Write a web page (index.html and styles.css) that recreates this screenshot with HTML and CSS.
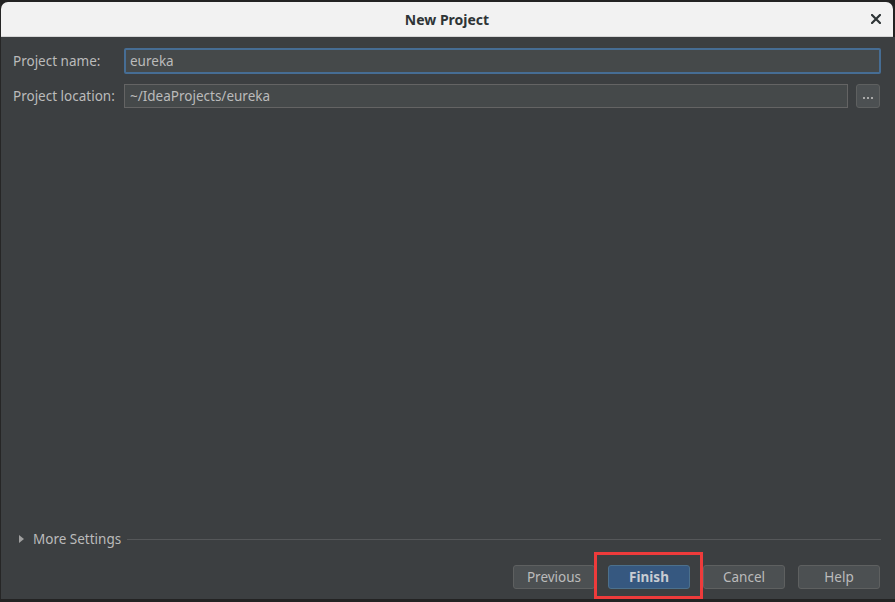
FILE: index.html
```html
<!DOCTYPE html>
<html>
<head>
<meta charset="utf-8">
<link rel="stylesheet" href="styles.css">
</head>
<body>
<div class="window">
  <div class="titlebar">
    <span></span>
    <span class="title">New Project</span>
    <span class="close">
      <svg width="10" height="10" viewBox="0 0 10 10"><path d="M1 1 L9 9 M9 1 L1 9" stroke="#2e3436" stroke-width="2.2" stroke-linecap="square"/></svg>
    </span>
  </div>
  <div class="content">
    <div class="form">
      <label class="label">Project name:</label>
      <div class="field focused">eureka</div>
      <label class="label">Project location:</label>
      <div class="field">~/IdeaProjects/eureka</div>
      <div class="browse"><span></span><span></span><span></span></div>
    </div>
    <div class="spacer"></div>
    <div class="more">
      <svg class="tri" width="5" height="8" viewBox="0 0 5 8"><path d="M0 0 L5 4 L0 8 Z" fill="#a0a0a0"/></svg>
      <span class="more-text">More Settings</span>
      <span class="rule"></span>
    </div>
    <div class="buttons">
      <button class="btn">Previous</button>
      <button class="btn primary">Finish</button>
      <button class="btn">Cancel</button>
      <button class="btn">Help</button>
    </div>
  </div>
</div>
<div class="highlight"></div>
</body>
</html>
```
FILE: styles.css
```css
html, body {
  margin: 0;
  padding: 0;
}
body {
  width: 895px;
  height: 602px;
  overflow: hidden;
  background: #232323;
  font-family: "Noto Sans", "Open Sans", sans-serif;
  position: relative;
}
.window {
  margin-top: 2px;
  height: 597px;
  display: flex;
  flex-direction: column;
  border-left: 1px solid #262626;
}
.titlebar {
  height: 34px;
  background: #f2f2f2;
  border-radius: 7px 7px 0 0;
  border-bottom: 1px solid #d6d6d6;
  display: grid;
  grid-template-columns: 1fr auto 1fr;
  align-items: center;
  margin-right: 2px;
}
.title {
  font-weight: bold;
  font-size: 14px;
  color: #2e3436;
}
.close {
  justify-self: end;
  margin-right: 12px;
  display: flex;
}
.content {
  flex: 1;
  background: #3c3f41;
  display: flex;
  flex-direction: column;
  padding: 11px 14px 10px 12px;
  color: #bbbbbb;
  font-size: 13.5px;
}
.form {
  display: grid;
  grid-template-columns: 111px 1fr 33px;
  row-gap: 10px;
  align-items: center;
}
.label {
  color: #bbbbbb;
}
.field {
  box-sizing: border-box;
  height: 24px;
  background: #45494a;
  border: 1px solid #646464;
  padding-left: 5px;
  display: flex;
  align-items: center;
  color: #bbbbbb;
}
.field.focused {
  grid-column: 2 / 4;
  height: 26px;
  border: 2px solid #466d94;
  border-radius: 2px;
  padding-left: 4px;
}
.browse {
  box-sizing: border-box;
  height: 24px;
  margin-left: 8px;
  width: 24px;
  background: #4c5052;
  border: 1px solid #5e6060;
  border-radius: 3px;
  display: flex;
  align-items: center;
  justify-content: center;
  gap: 2px;
  padding-top: 3px;
}
.browse span {
  width: 2px;
  height: 2px;
  background: #a9a9a9;
}
.spacer {
  flex: 1;
}
.more {
  display: flex;
  align-items: center;
  height: 16px;
  padding-left: 6px;
}
.tri {
  margin-right: 9px;
}
.more-text {
  color: #bbbbbb;
}
.rule {
  flex: 1;
  height: 1px;
  background: #555759;
  margin-left: 6px;
  margin-top: 1px;
}
.buttons {
  margin-top: 18px;
  display: flex;
  justify-content: flex-end;
  gap: 13px;
  padding-right: 1px;
}
.btn {
  box-sizing: border-box;
  height: 24px;
  width: 82px;
  background: #4c5052;
  border: 1px solid #5e6060;
  border-radius: 3px;
  color: #bbbbbb;
  font-family: "Noto Sans", "Open Sans", sans-serif;
  font-size: 13.5px;
  padding: 0;
}
.btn.primary {
  background: #365880;
  border-color: #4c708c;
  font-weight: bold;
  color: #c8ccd2;
}
.highlight {
  position: absolute;
  left: 594px;
  top: 552px;
  width: 103px;
  height: 41px;
  border: 3px solid #ee3b3b;
}
```
